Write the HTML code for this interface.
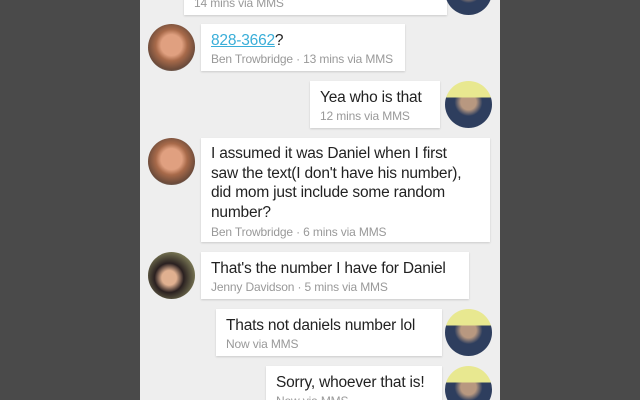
<!DOCTYPE html>
<html><head><style>
html,body{margin:0;width:640px;height:400px;overflow:hidden}
body{background:#4a4a4a;font-family:"Liberation Sans",sans-serif;position:relative}
#p{position:absolute;left:140px;top:0;width:360px;height:400px;background:#eeeeee}
.b{position:absolute;background:#fff;box-shadow:0 1px 2px rgba(0,0,0,.15);box-sizing:border-box;padding:6px 0 0 10px;color:#222;font-size:15.5px;line-height:21px;white-space:nowrap;letter-spacing:-0.2px}
.m{font-size:12px;color:#999;line-height:16px;margin-top:0;letter-spacing:-0.15px}
.a{position:absolute;width:47px;height:47px;border-radius:50%}
.ben{background:radial-gradient(circle at 50% 45%,#e0a080 0 30%,#a86a4a 45%,#6a4a3a 70%,#8a9aa0 85%)}
.me{background:linear-gradient(#e8e890 0 35%,transparent 35%),radial-gradient(circle at 50% 45%,#b89880 0 22%,#2e3e5e 40%)}
.jen{background:radial-gradient(circle at 45% 55%,#e0b090 0 20%,#2a2020 40%,#8a8a60 80%)}
</style></head><body>
<div id="p"></div>
<div class="b" style="left:184px;top:-32px;width:263px;height:47px"><div style="height:21px"></div><div class="m">14 mins via MMS</div></div>
<div class="a me" style="left:445px;top:-32px"></div>

<div class="a ben" style="left:148px;top:24px"></div>
<div class="b" style="left:201px;top:24px;width:204px;height:47px"><span style="color:#3aaed8;text-decoration:underline">828-3662</span>?<div class="m">Ben Trowbridge · 13 mins via MMS</div></div>

<div class="b" style="left:310px;top:81px;width:130px;height:47px">Yea who is that<div class="m">12 mins via MMS</div></div>
<div class="a me" style="left:445px;top:81px"></div>

<div class="a ben" style="left:148px;top:138px"></div>
<div class="b" style="left:201px;top:138px;width:289px;height:104px;padding-top:6px;line-height:19.5px">I assumed it was Daniel when I first<br>saw the text(I don't have his number),<br>did mom just include some random<br>number?<div class="m" style="margin-top:2px">Ben Trowbridge · 6 mins via MMS</div></div>

<div class="a jen" style="left:148px;top:252px"></div>
<div class="b" style="left:201px;top:252px;width:268px;height:47px">That's the number I have for Daniel<div class="m">Jenny Davidson · 5 mins via MMS</div></div>

<div class="b" style="left:216px;top:309px;width:226px;height:47px">Thats not daniels number lol<div class="m">Now via MMS</div></div>
<div class="a me" style="left:445px;top:309px"></div>

<div class="b" style="left:266px;top:366px;width:176px;height:47px">Sorry, whoever that is!<div class="m">Now via MMS</div></div>
<div class="a me" style="left:445px;top:366px"></div>
</body></html>
